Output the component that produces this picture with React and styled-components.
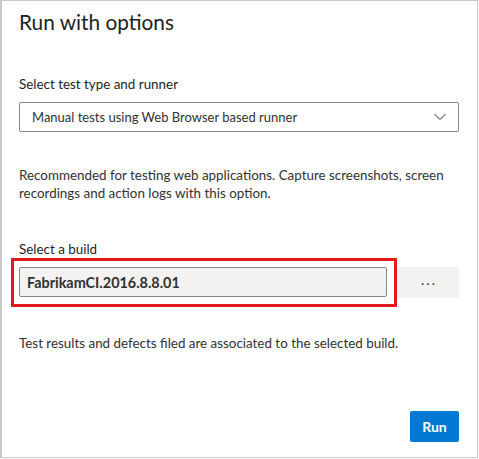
import styled, { createGlobalStyle } from "styled-components";

const GlobalStyle = createGlobalStyle`
  html, body {
    margin: 0;
    padding: 0;
    background: #ffffff;
  }
  body {
    font-family: "Segoe UI", Lato, "Open Sans", sans-serif;
    color: #201f1e;
  }
`;

const Panel = styled.div`
  width: 478px;
  height: 458px;
  box-sizing: border-box;
  border: 1px solid #c8c8c8;
  border-left-width: 2px;
  padding: 7px 18px 15px 17px;
  display: flex;
  flex-direction: column;
  background: #ffffff;
`;

const Title = styled.h1`
  margin: 0;
  font-size: 20.8px;
  line-height: 28px;
  font-weight: 400;
  color: #201f1e;
`;

const Label = styled.div`
  margin-top: ${({ marginTop }) => marginTop}px;
  font-size: 13.4px;
  line-height: 20px;
  color: #201f1e;
`;

const Dropdown = styled.div`
  margin-top: 8px;
  height: 30px;
  box-sizing: border-box;
  border: 1px solid #8a8886;
  border-radius: 2px;
  display: flex;
  align-items: center;
  justify-content: space-between;
  padding: 0 12px 0 12px;
  font-size: 13px;
  color: #323130;
`;

const Help = styled.p`
  margin: ${({ marginTop }) => marginTop}px 0 0 0;
  font-size: 13.4px;
  line-height: 18px;
  color: #323130;
`;

const BuildRow = styled.div`
  margin-top: 8px;
  display: flex;
  gap: 10px;
`;

const InputWrap = styled.div`
  position: relative;
  flex: 1;
`;

const BuildInput = styled.div`
  height: 30px;
  box-sizing: border-box;
  border: 1px solid #8a8886;
  border-radius: 2px;
  background: #f3f2f1;
  display: flex;
  align-items: center;
  padding: 0 7px;
  font-size: 14.4px;
  font-weight: 700;
  color: #323130;
`;

const Highlight = styled.div`
  position: absolute;
  left: -8px;
  top: -9px;
  right: -10px;
  bottom: -9px;
  border: 3px solid #e3191f;
  pointer-events: none;
`;

const MoreButton = styled.button`
  width: 62px;
  height: 31px;
  border: none;
  border-radius: 2px;
  background: #f3f2f1;
  color: #323130;
  font-family: inherit;
  font-size: 14px;
  letter-spacing: 2px;
  padding: 0 0 6px 2px;
`;

const Footer = styled.div`
  margin-top: auto;
  display: flex;
  justify-content: flex-end;
`;

const RunButton = styled.button`
  width: 49px;
  height: 31px;
  border: none;
  border-radius: 2px;
  background: #0078d4;
  color: #ffffff;
  font-family: inherit;
  font-size: 14px;
  font-weight: 700;
  padding: 0;
`;

const Chevron = () => (
  <svg width="12" height="8" viewBox="0 0 12 8">
    <polyline points="0.5,1 6,6.5 11.5,1" fill="none" stroke="#323130" strokeWidth="1" />
  </svg>
);

const App = () => {
  return (
    <>
      <GlobalStyle />
      <Panel>
        <Title>Run with options</Title>
        <Label marginTop={38}>Select test type and runner</Label>
        <Dropdown>
          <span>Manual tests using Web Browser based runner</span>
          <Chevron />
        </Dropdown>
        <Help marginTop={34}>
          Recommended for testing web applications. Capture screenshots, screen
          recordings and action logs with this option.
        </Help>
        <Label marginTop={37}>Select a build</Label>
        <BuildRow>
          <InputWrap>
            <BuildInput>FabrikamCI.2016.8.8.01</BuildInput>
            <Highlight />
          </InputWrap>
          <MoreButton>...</MoreButton>
        </BuildRow>
        <Help marginTop={36}>
          Test results and defects filed are associated to the selected build.
        </Help>
        <Footer>
          <RunButton>Run</RunButton>
        </Footer>
      </Panel>
    </>
  );
};

export default App;
